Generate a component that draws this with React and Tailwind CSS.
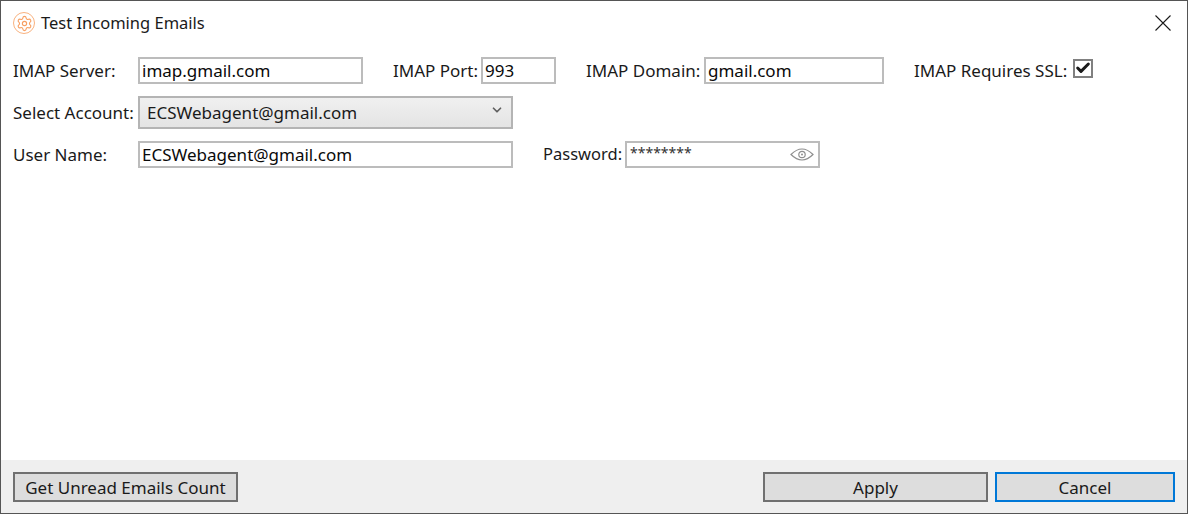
import React from 'react';
import { Settings, ChevronDown, Check } from 'lucide-react';

const font = "font-['Noto_Sans',sans-serif]";

const TextBox = ({ value, className }) => (
  <div className={`h-[27px] flex items-center border-2 border-[#bcbcbc] bg-white pl-[2px] text-[#0a0a0a] ${className}`}>
    {value}
  </div>
);

const Label = ({ children, className }) => (
  <span className={`whitespace-nowrap text-[#1a1a1a] ${className}`}>{children}</span>
);

const FooterButton = ({ children, className }) => (
  <button className={`h-[30px] border-2 bg-[#dddddd] text-[#1a1a1a] ${className}`}>{children}</button>
);

export default function App() {
  return (
    <div className={`${font} w-[1188px] h-[514px] flex flex-col overflow-hidden bg-white border border-[#555555] text-[17px] leading-none`}>
      <div className="h-[44px] flex items-center pl-3 pr-[16px] shrink-0">
        <div className="w-[22px] h-[22px] rounded-full border border-[#f9b27f] flex items-center justify-center">
          <Settings size={17} strokeWidth={1.6} className="text-[#f7a064]" />
        </div>
        <span className="ml-[6px] text-[16.5px] text-[#1a1a1a]">Test Incoming Emails</span>
        <svg width="16" height="16" viewBox="0 0 16 16" className="ml-auto text-[#1a1a1a]">
          <path d="M0.5 0.5L15.5 15.5M15.5 0.5L0.5 15.5" stroke="currentColor" strokeWidth="1.1" fill="none" />
        </svg>
      </div>

      <div className="flex-1 pl-3 pt-[12px]">
        <div className="flex items-center">
          <Label className="w-[125px]">IMAP Server:</Label>
          <TextBox value="imap.gmail.com" className="w-[225px]" />
          <Label className="ml-[30px] w-[88px]">IMAP Port:</Label>
          <TextBox value="993" className="w-[75px]" />
          <Label className="ml-[30px] w-[118px]">IMAP Domain:</Label>
          <TextBox value="gmail.com" className="w-[180px]" />
          <Label className="ml-[30px] w-[159px]">IMAP Requires SSL:</Label>
          <div className="w-[20px] h-[19px] -mt-[5px] border-2 border-[#808080] flex items-center justify-center">
            <Check size={16} strokeWidth={4.5} className="text-[#1a1a1a]" />
          </div>
        </div>

        <div className="flex items-center mt-[12px]">
          <Label className="w-[125px]">Select Account:</Label>
          <div className="w-[375px] h-[33px] flex items-center justify-between border-2 border-[#b4b4b4] bg-gradient-to-b from-[#f0f0f0] to-[#e4e4e4] pl-[7px] pr-[7px]">
            <span className="text-[#1a1a1a]">ECSWebagent@gmail.com</span>
            <ChevronDown size={14} strokeWidth={3} className="text-[#606060] -mt-[5px]" />
          </div>
        </div>

        <div className="flex items-center mt-[12px]">
          <Label className="w-[125px]">User Name:</Label>
          <TextBox value="ECSWebagent@gmail.com" className="w-[375px]" />
          <Label className="ml-[30px] w-[82px] text-[16.5px]">Password:</Label>
          <div className="w-[195px] h-[27px] flex items-center justify-between border-2 border-[#bcbcbc] pl-[3px] pr-[4px]">
            <span className="text-[14px] text-[#333333] -mt-[3px]">********</span>
            <svg width="24" height="13" viewBox="0 0 24 13" fill="none" stroke="#8f8f8f" strokeWidth="1.2">
              <path d="M1 6.5C5 2.5 8.5 1 12 1s7 1.5 11 5.5C19 10.5 15.5 12 12 12S5 10.5 1 6.5Z" />
              <circle cx="12" cy="6.5" r="3.2" />
              <circle cx="12" cy="6.5" r="1" fill="#8f8f8f" stroke="none" />
            </svg>
          </div>
        </div>
      </div>

      <div className="h-[53px] shrink-0 flex items-center bg-[#efefef] pl-3 pr-3 pt-[1px]">
        <FooterButton className="w-[225px] border-[#707070]">Get Unread Emails Count</FooterButton>
        <FooterButton className="w-[225px] ml-auto border-[#707070]">Apply</FooterButton>
        <FooterButton className="w-[180px] ml-[7px] border-[#0078d7]">Cancel</FooterButton>
      </div>
    </div>
  );
}
